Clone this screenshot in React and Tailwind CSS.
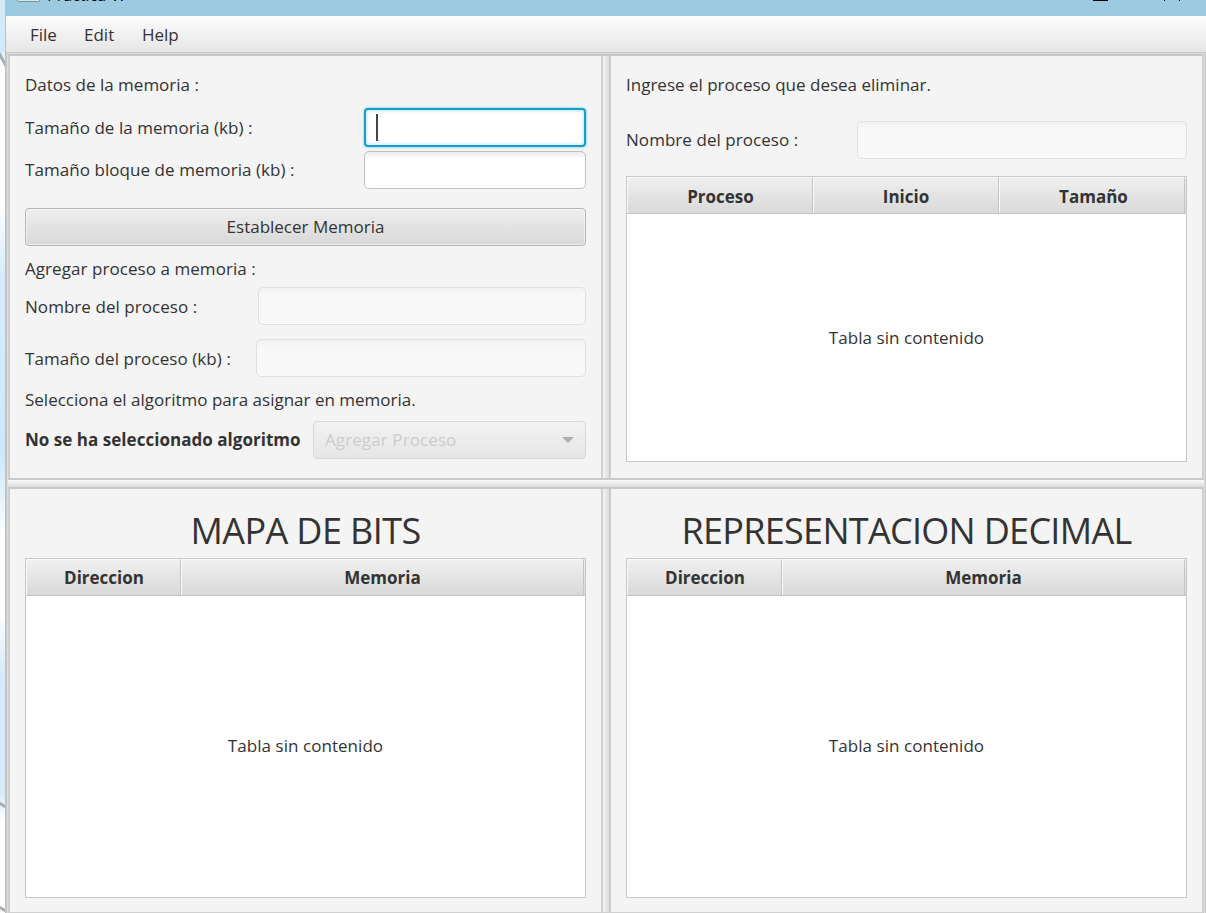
import React from "react";

const disabledField =
  "h-[38px] rounded-[5px] border border-[#e0e0e0] bg-gradient-to-b from-[#f1f1f1] via-[#f8f8f8] via-20% to-[#f8f8f8]";

function Table({ columns, height, emptyPad }) {
  return (
    <div className={"flex w-[561px] flex-col border border-[#c8c8c8] bg-white " + height}>
      <div className="flex h-[37px] shrink-0 border-b border-[#c4c4c4] bg-gradient-to-b from-[#f0f0f0] to-[#d9d9d9] text-[17px] font-bold">
        {columns.map(([name, width, shift]) => (
          <div
            key={name}
            className={
              "flex items-center justify-center border-t border-r border-l border-t-[#fafafa] border-r-[#c4c4c4] border-l-[#fafafa] " + width + " " + shift
            }
          >
            <span>{name}</span>
          </div>
        ))}
      </div>
      <div className={"flex grow items-center justify-center " + emptyPad}>
        <span className="tracking-[0.05px]">Tabla sin contenido</span>
      </div>
    </div>
  );
}

function VerticalDivider() {
  return (
    <div className="w-[10px] shrink-0 border-r-2 border-l-2 border-r-[#cbcbcb] border-l-[#d0d0d0] bg-gradient-to-r from-[#f5f5f5] to-[#dcdcdc]" />
  );
}

export default function App() {
  return (
    <div className="flex h-[913px] w-[1206px] overflow-hidden bg-[#f4f4f4] font-['Open_Sans','Noto_Sans',sans-serif] text-[17px] leading-[24px] whitespace-nowrap text-[#333333]">
      <svg className="h-[913px] w-[5px] shrink-0" viewBox="0 0 5 913">
        <defs>
          <linearGradient id="desk" x1="0" y1="0" x2="0" y2="1">
            <stop offset="0" stopColor="#d4e9f7" />
            <stop offset="0.055" stopColor="#d4e9fb" />
            <stop offset="0.07" stopColor="#ffffff" />
            <stop offset="0.22" stopColor="#ffffff" />
            <stop offset="0.3" stopColor="#d8ebfc" />
            <stop offset="0.5" stopColor="#cfe7f9" />
            <stop offset="0.59" stopColor="#ffffff" />
            <stop offset="0.67" stopColor="#ffffff" />
            <stop offset="0.74" stopColor="#d6e9fb" />
            <stop offset="0.87" stopColor="#dce9fb" />
            <stop offset="0.9" stopColor="#ffffff" />
            <stop offset="1" stopColor="#ffffff" />
          </linearGradient>
        </defs>
        <rect width="5" height="913" fill="url(#desk)" />
        <path d="M-1 53 L6 66 M-1 803 L6 807 M-1 907 L6 911" stroke="#a6afb3" strokeWidth="3" />
      </svg>
      <div className="flex w-[1201px] flex-col border-l border-[#9ccbe2]">
        <div className="flex h-4 shrink-0 items-start overflow-hidden bg-[#9ccae1] text-black">
          <div className="ml-[11px] h-[2px] w-[23px] rounded-b-sm border-r border-b border-l border-[#7a9694] bg-[#d5e5e3]" />
          <div className="mt-[-16px] ml-[7px] h-5 w-20 text-[16px] leading-[23px]">Practica V.</div>
          <div className="ml-[966px] h-px w-[15px] bg-black" />
          <div className="ml-[56px] h-px w-px bg-black" />
          <div className="ml-[14px] h-px w-px bg-black" />
        </div>
        <div className="flex h-9 shrink-0 bg-gradient-to-b from-[#fcfcfc] to-[#e6e6e6] pt-[7px] pl-[24px]">
          <span className="w-[54px]">File</span>
          <span className="w-[58px]">Edit</span>
          <span>Help</span>
        </div>
        <div className="flex h-[861px] grow flex-col border-t border-r border-l border-t-[#c8c8c8] border-r-[#c8c8c8] border-l-[#c8c8c8]">
          <div className="flex grow flex-col border-t border-r border-l border-[#dddddd]">
            <div className="flex h-[426px] shrink-0 border-2 border-x-[#cecece] border-t-[#c8c8c8] border-b-[#c9c9c9]">
              <div className="w-[591px] shrink-0 pt-[17px] pl-[15px]">
                <div className="h-[34px]">Datos de la memoria :</div>
                <div className="flex h-[42px] items-center">
                  <span className="w-[339px] tracking-[0.05px]">Tamaño de la memoria (kb) :</span>
                  <div className="mb-px flex h-[39px] w-[222px] items-center rounded-[4px] border-2 border-[#1d9bc6] bg-white pl-[10px] shadow-[0_0_2px_1px_#a9e2f6,inset_0_0_2px_2px_#d5f2fb]">
                    <div className="h-[27px] w-[2px] bg-[#444444]" />
                  </div>
                </div>
                <div className="flex h-[42px] items-center">
                  <span className="w-[339px] tracking-[0.06px]">Tamaño bloque de memoria (kb) :</span>
                  <div className="mb-px h-[38px] w-[222px] rounded-[5px] border border-[#c0c0c0] bg-gradient-to-b from-[#ececec] via-white via-20% to-white" />
                </div>
                <div className="mt-[17px] flex h-[38px] w-[561px] items-center justify-center rounded-[4px] border border-[#b4b4b4] bg-gradient-to-b from-[#eeeeee] to-[#d8d8d8] shadow-[inset_0_0_0_1px_rgba(255,255,255,0.55)]">
                  <span>Establecer Memoria</span>
                </div>
                <div className="mt-[11px] h-[30px] tracking-[0.06px]">Agregar proceso a memoria :</div>
                <div className="flex h-[38px] items-center">
                  <span className="w-[233px] pt-px tracking-[0.05px]">Nombre del proceso :</span>
                  <div className={"w-[328px] " + disabledField} />
                </div>
                <div className="mt-[14px] flex h-[38px] items-center">
                  <span className="w-[231px] pt-px tracking-[0.08px]">Tamaño del proceso (kb) :</span>
                  <div className={"w-[330px] " + disabledField} />
                </div>
                <div className="mt-[11px] h-[33px]">Selecciona el algoritmo para asignar en memoria.</div>
                <div className="flex h-[38px] items-center">
                  <span className="w-[288px] font-bold tracking-[0.03px]">No se ha seleccionado algoritmo</span>
                  <div className="flex h-[38px] w-[273px] items-center justify-between rounded-[4px] border border-[#d8d8d8] bg-gradient-to-b from-[#f2f2f2] to-[#e6e6e6] pr-[11px] pl-[11px] text-[#cccccc]">
                    <span className="tracking-[0.1px]">Agregar Proceso</span>
                    <svg width="12" height="6" viewBox="0 0 12 6">
                      <path d="M0 0H12L6 6Z" fill="#aeaeae" />
                    </svg>
                  </div>
                </div>
              </div>
              <VerticalDivider />
              <div className="grow pt-[17px] pl-[15px]">
                <div className="h-[48px]">Ingrese el proceso que desea eliminar.</div>
                <div className="flex h-[38px] w-[561px] items-center">
                  <span className="w-[231px] tracking-[0.05px]">Nombre del proceso :</span>
                  <div className={"w-[330px] " + disabledField} />
                </div>
                <div className="mt-[17px]">
                  <Table
                    height="h-[286px]"
                    emptyPad="pb-0"
                    columns={[
                      ["Proceso", "w-[186px]", "pt-[3px] pl-px"],
                      ["Inicio", "w-[186px]", "pt-[3px]"],
                      ["Tamaño", "w-[186px]", "pt-[3px] pl-[3px]"],
                    ]}
                  />
                </div>
              </div>
            </div>
            <div className="h-[7px] shrink-0 bg-gradient-to-b from-[#fafafa] to-[#dddddd]" />
            <div className="flex grow border-x-2 border-t-2 border-b border-x-[#cecece] border-t-[#c8c8c8] border-b-[#d0d0d0]">
              <div className="w-[591px] shrink-0 pt-[17px] pl-[15px]">
                <div className="flex h-[52px] w-[561px] items-center justify-center pb-[3px] text-[36px] tracking-[-0.6px]">
                  <span>MAPA DE BITS</span>
                </div>
                <Table
                  height="h-[340px]"
                  emptyPad="pb-[2px]"
                  columns={[
                    ["Direccion", "w-[155px]", "pt-px pl-px"],
                    ["Memoria", "w-[403px]", "pt-px"],
                  ]}
                />
              </div>
              <VerticalDivider />
              <div className="grow pt-[17px] pl-[15px]">
                <div className="flex h-[52px] w-[561px] items-center justify-center pb-[3px] text-[36px] tracking-[-0.7px]">
                  <span>REPRESENTACION DECIMAL</span>
                </div>
                <Table
                  height="h-[340px]"
                  emptyPad="pb-[2px]"
                  columns={[
                    ["Direccion", "w-[155px]", "pt-px pl-px"],
                    ["Memoria", "w-[403px]", "pt-px"],
                  ]}
                />
              </div>
            </div>
          </div>
        </div>
      </div>
    </div>
  );
}
